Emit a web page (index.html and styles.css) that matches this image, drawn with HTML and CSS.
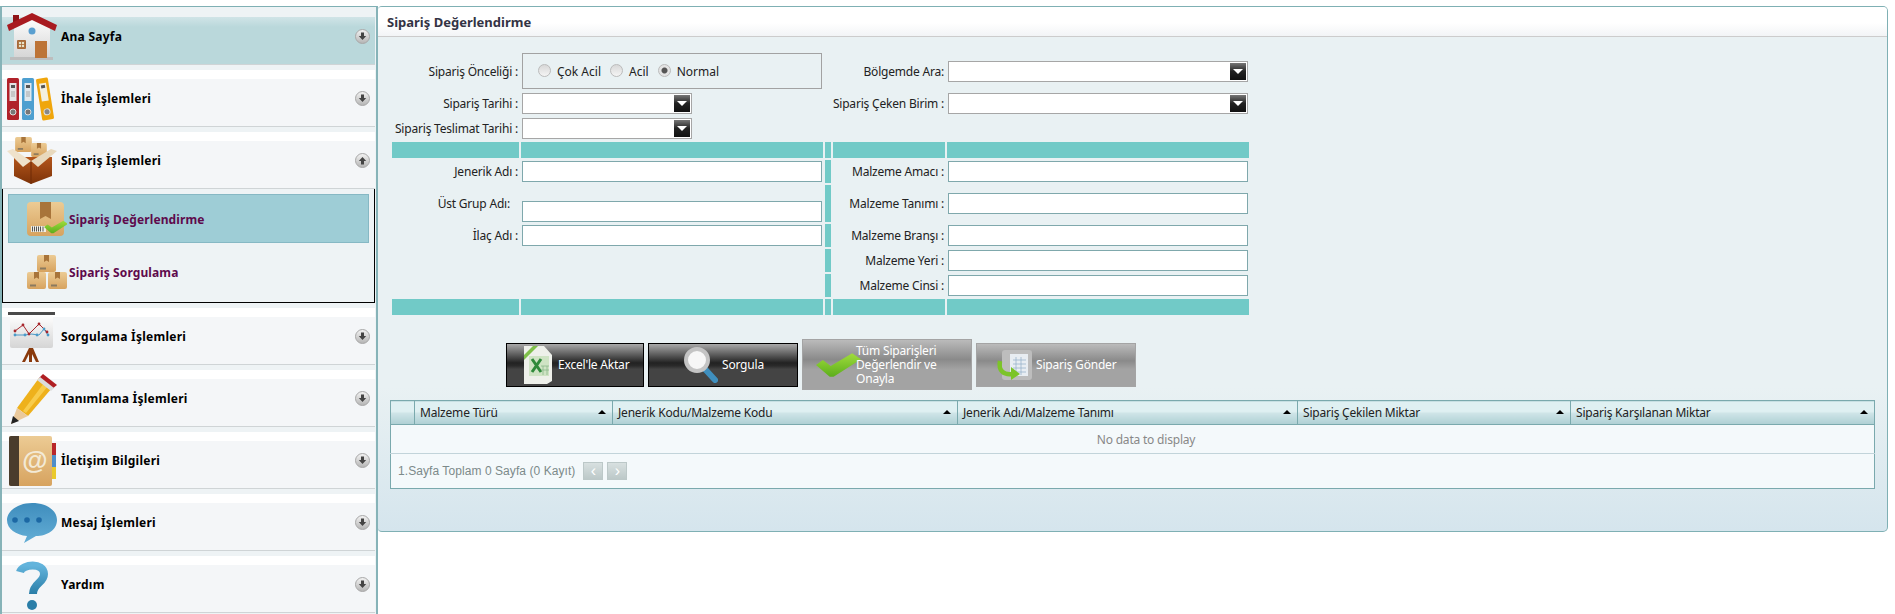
FILE: index.html
```html
<!DOCTYPE html>
<html lang="tr">
<head>
  <meta charset="UTF-8" />
  <title>Sipariş Değerlendirme</title>
  <link rel="stylesheet" href="styles.css">
</head>
<body>
  <svg class="defs" width="0" height="0">
    <defs>
      <linearGradient id="disc" x1="0" y1="0" x2="0" y2="1"><stop offset="0" stop-color="#f4f4f4"/><stop offset="1" stop-color="#b4b4b4"/></linearGradient>
      <linearGradient id="kraft" x1="0" y1="0" x2="0" y2="1"><stop offset="0" stop-color="#eccb94"/><stop offset="1" stop-color="#d7a35f"/></linearGradient>
      <linearGradient id="brown" x1="0" y1="0" x2="0" y2="1"><stop offset="0" stop-color="#b4561c"/><stop offset="1" stop-color="#7c3208"/></linearGradient>
      <linearGradient id="wall" x1="0" y1="0" x2="0" y2="1"><stop offset="0" stop-color="#ffffff"/><stop offset="1" stop-color="#d5d5d5"/></linearGradient>
      <linearGradient id="bluebub" x1="0" y1="0" x2="0" y2="1"><stop offset="0" stop-color="#3f8dbd"/><stop offset="1" stop-color="#63aed6"/></linearGradient>
      <linearGradient id="quest" x1="0" y1="0" x2="0" y2="1"><stop offset="0" stop-color="#63b4dc"/><stop offset="1" stop-color="#2a7ea8"/></linearGradient>
      <linearGradient id="checkg" x1="0" y1="0" x2="0" y2="1"><stop offset="0" stop-color="#a0dc3c"/><stop offset="1" stop-color="#5cae1c"/></linearGradient>
      <symbol id="arrow-down" viewBox="0 0 15 15">
        <circle cx="7.5" cy="7.5" r="7" fill="url(#disc)" stroke="#a8a8a8"/>
        <path d="M6 3.5h3v3.5h2.2L7.5 11 3.8 7H6z" fill="#444"/>
      </symbol>
      <symbol id="arrow-up" viewBox="0 0 15 15">
        <circle cx="7.5" cy="7.5" r="7" fill="url(#disc)" stroke="#a8a8a8"/>
        <path d="M6 11.5h3V8h2.2L7.5 4 3.8 8H6z" fill="#444"/>
      </symbol>
      <symbol id="pkg" viewBox="0 0 19 17">
        <rect x="0" y="0" width="19" height="17" rx="2" fill="url(#kraft)"/>
        <path d="M7 0h5v7l-2.5-1.5L7 7z" fill="#a8743a"/>
        <rect x="3" y="12.500" width="6" height="2" fill="#8a7a60"/>
      </symbol>
      <symbol id="check" viewBox="0 0 46 24">
        <path d="M0 12l7-5 8 6L37 0l9 6-28 18h-4z" fill="url(#checkg)"/>
      </symbol>
    </defs>
  </svg>

  <div class="page">
    <aside class="sidebar">
      <div class="menu-group">
        <div class="menu-head active">
          <svg class="menu-icon" viewBox="0 0 50 48">
            <rect x="6" y="2" width="6" height="9" fill="#8f1418"/>
            <path d="M7 14L25 3l18 11v31H7z" fill="url(#wall)"/>
            <rect x="3" y="44" width="43" height="3" fill="#bdbdbd"/>
            <path d="M0 12L25 0l25 12-2 6L25 7 2 18z" fill="#a81a20"/>
            <circle cx="25" cy="18" r="3.500" fill="#5a9fd0"/>
            <rect x="28" y="28" width="12" height="17" fill="#bd7336"/>
            <rect x="10" y="27" width="9" height="9" rx="1" fill="#a86a38"/>
            <path d="M11.500 28.500h6v6h-6zM14.500 28.500v6M11.500 31.500h6" fill="#e8e4c8" stroke="#a86a38" stroke-width=".8"/>
          </svg>
          <span class="menu-title">Ana Sayfa</span>
          <svg class="menu-arrow"><use href="#arrow-down"/></svg>
        </div>
      </div>

      <div class="menu-group">
        <div class="menu-head">
          <svg class="menu-icon" viewBox="0 0 50 44">
            <rect x="0" y="1" width="12" height="42" rx="1.500" fill="#b0222a"/>
            <rect x="15" y="1" width="12" height="42" rx="1.500" fill="#4d9fd0"/>
            <g transform="rotate(-9 38 22)">
              <rect x="32" y="1" width="12" height="42" rx="1.500" fill="#f0a60c"/>
              <rect x="34.500" y="6" width="7" height="18" fill="#f3efdf"/>
              <rect x="36" y="8" width="4" height="3" fill="#555"/>
              <circle cx="38" cy="35" r="3" fill="#888" stroke="#ddd"/>
            </g>
            <rect x="2.500" y="6" width="7" height="18" fill="#e4e4e4"/>
            <rect x="4" y="8" width="4" height="3" fill="#555"/>
            <rect x="17.500" y="6" width="7" height="18" fill="#dfe7ec"/>
            <rect x="19" y="8" width="4" height="3" fill="#555"/>
            <path d="M4 15h4M4 17h4M4 19h4M19 15h4M19 17h4M19 19h4" stroke="#999" stroke-width=".8"/>
            <circle cx="6" cy="35" r="3" fill="#777" stroke="#ddd"/>
            <circle cx="21" cy="35" r="3" fill="#777" stroke="#ddd"/>
          </svg>
          <span class="menu-title">İhale İşlemleri</span>
          <svg class="menu-arrow"><use href="#arrow-down"/></svg>
        </div>
      </div>

      <div class="menu-group">
        <div class="menu-head">
          <svg class="menu-icon" viewBox="0 0 50 48">
            <use href="#pkg" x="8" y="0" width="17" height="15"/>
            <use href="#pkg" x="24" y="6" width="16" height="14"/>
            <path d="M7 20h38v19L24 47 7 39z" fill="url(#brown)"/>
            <path d="M24 24v23" stroke="#6e2b06"/>
            <path d="M0 14l6 -2 18 12-8 6z" fill="#efe2cb"/>
            <path d="M50 14l-6 -2-20 12 7 6z" fill="#e8d9bd"/>
          </svg>
          <span class="menu-title">Sipariş İşlemleri</span>
          <svg class="menu-arrow"><use href="#arrow-up"/></svg>
        </div>
        <div class="submenu">
          <div class="sub-item selected">
            <svg class="sub-icon" viewBox="0 0 40 36">
              <rect x="0" y="1" width="37" height="34" rx="4" fill="url(#kraft)"/>
              <path d="M13 1h11v17l-5.500-3-5.500 3z" fill="#a8743a"/>
              <rect x="4" y="25" width="15" height="6" fill="#f2efe4"/>
              <path d="M5.500 25.500v5M7.500 25.500v5M9.500 25.500v5M11.500 25.500v5M13.500 25.500v5M16 25.500v5" stroke="#555"/>
              <use href="#check" x="17" y="17" width="24" height="18"/>
            </svg>
            <span class="sub-title">Sipariş Değerlendirme</span>
          </div>
          <div class="sub-item">
            <svg class="sub-icon" viewBox="0 0 40 34">
              <use href="#pkg" x="10" y="0" width="19" height="17"/>
              <use href="#pkg" x="0" y="17" width="19" height="17"/>
              <use href="#pkg" x="21" y="17" width="19" height="17"/>
            </svg>
            <span class="sub-title">Sipariş Sorgulama</span>
          </div>
        </div>
      </div>

      <div class="menu-group">
        <div class="menu-head">
          <svg class="menu-icon" viewBox="0 0 50 50">
            <rect x="1" y="0" width="47" height="3" fill="#4a4a4a"/>
            <rect x="3" y="3" width="43" height="33" rx="2" fill="url(#wall)"/>
            <path d="M22 36h4l6 14h-3l-4-8v8h-3v-8l-4 8h-3z" fill="#8a3a0c"/>
            <path d="M8 19l8-6 6 9 10-10 8 8" fill="none" stroke="#a8262c" stroke-width="1"/>
            <path d="M8 23h10l6-1 8 1 5-6 4 6" fill="none" stroke="#4b9ac8" stroke-width="1"/>
            <g fill="#a8262c"><circle cx="8" cy="19" r="1.400"/><circle cx="16" cy="13" r="1.400"/><circle cx="22" cy="22" r="1.400"/><circle cx="32" cy="12" r="1.400"/><circle cx="40" cy="20" r="1.400"/></g>
            <g fill="#4b9ac8"><circle cx="8" cy="23" r="1.400"/><circle cx="18" cy="23" r="1.400"/><circle cx="30" cy="23" r="1.400"/><circle cx="37" cy="17" r="1.400"/><circle cx="41" cy="23" r="1.400"/></g>
          </svg>
          <span class="menu-title">Sorgulama İşlemleri</span>
          <svg class="menu-arrow"><use href="#arrow-down"/></svg>
        </div>
      </div>

      <div class="menu-group">
        <div class="menu-head">
          <svg class="menu-icon" viewBox="0 0 50 50">
            <path d="M10 34L32 4l13 10-24 28z" fill="#eeb11c"/>
            <path d="M16 37L37 9l4 3-22 27z" fill="#f8cc4c"/>
            <path d="M32 4l4-4 14 11-5 4z" fill="#b01e22"/>
            <path d="M30 6l3-3 14 11-3 3z" fill="#dcdcdc"/>
            <path d="M10 34l11 8L4 50z" fill="#eac99c"/>
            <path d="M6 42l6 5-8 3z" fill="#222"/>
          </svg>
          <span class="menu-title">Tanımlama İşlemleri</span>
          <svg class="menu-arrow"><use href="#arrow-down"/></svg>
        </div>
      </div>

      <div class="menu-group">
        <div class="menu-head">
          <svg class="menu-icon" viewBox="0 0 50 50">
            <rect x="44" y="7" width="5" height="12" fill="#b8262a"/>
            <rect x="44" y="19" width="5" height="12" fill="#4f8ec8"/>
            <rect x="44" y="31" width="5" height="12" fill="#eac92c"/>
            <rect x="2" y="0" width="43" height="50" rx="2" fill="url(#kraft)"/>
            <path d="M4 0h8v50H4a2 2 0 0 1-2-2V2a2 2 0 0 1 2-2z" fill="#4a3c2c"/>
            <text x="28" y="33" class="at-sign">@</text>
          </svg>
          <span class="menu-title">İletişim Bilgileri</span>
          <svg class="menu-arrow"><use href="#arrow-down"/></svg>
        </div>
      </div>

      <div class="menu-group">
        <div class="menu-head">
          <svg class="menu-icon" viewBox="0 0 50 40">
            <path d="M25 0c14 0 25 7 25 17S40 33 29 33L17 40l3-7C9 32 0 26 0 17S11 0 25 0z" fill="url(#bluebub)"/>
            <circle cx="8" cy="17" r="2.800" fill="#1c68a4"/>
            <circle cx="20" cy="17" r="2.800" fill="#1c68a4"/>
            <circle cx="32" cy="17" r="2.800" fill="#1c68a4"/>
          </svg>
          <span class="menu-title">Mesaj İşlemleri</span>
          <svg class="menu-arrow"><use href="#arrow-down"/></svg>
        </div>
      </div>

      <div class="menu-group">
        <div class="menu-head">
          <svg class="menu-icon" viewBox="0 0 50 50">
            <path d="M13 12C15 4 37 2 37 14c0 9-11 9-11 20" fill="none" stroke="url(#quest)" stroke-width="8"/>
            <circle cx="25" cy="45" r="5" fill="#2a7ea8"/>
          </svg>
          <span class="menu-title">Yardım</span>
          <svg class="menu-arrow"><use href="#arrow-down"/></svg>
        </div>
      </div>
    </aside>

    <main class="panel">
      <div class="panel-head">Sipariş Değerlendirme</div>
      <div class="panel-body">

        <div class="filter-grid">
          <label class="lbl row-a">Sipariş Önceliği :</label>
          <div class="priority">
            <label class="radio"><input type="radio" name="oncelik"> Çok Acil</label>
            <label class="radio"><input type="radio" name="oncelik"> Acil</label>
            <label class="radio"><input type="radio" name="oncelik" checked> Normal</label>
          </div>
          <i></i>
          <label class="lbl">Bölgemde Ara:</label>
          <div class="select wide"><b></b></div>

          <label class="lbl top">Sipariş Tarihi :</label>
          <div class="select narrow top"><b></b></div>
          <i></i>
          <label class="lbl top">Sipariş Çeken Birim :</label>
          <div class="select wide top"><b></b></div>

          <label class="lbl top">Sipariş Teslimat Tarihi :</label>
          <div class="select narrow top"><b></b></div>
          <i></i><i></i><i></i>

          <div class="bar"></div><div class="bar"></div><div class="bar"></div><div class="bar"></div><div class="bar"></div>

          <label class="lbl">Jenerik Adı :</label>
          <input class="field" type="text">
          <div class="bar"></div>
          <label class="lbl">Malzeme Amacı :</label>
          <input class="field" type="text">

          <label class="lbl inset">Üst Grup Adı:</label>
          <input class="field low" type="text">
          <div class="bar"></div>
          <label class="lbl">Malzeme Tanımı :</label>
          <input class="field" type="text">

          <label class="lbl">İlaç Adı :</label>
          <input class="field" type="text">
          <div class="bar"></div>
          <label class="lbl">Malzeme Branşı :</label>
          <input class="field" type="text">

          <i></i><i></i>
          <div class="bar"></div>
          <label class="lbl">Malzeme Yeri :</label>
          <input class="field" type="text">

          <i></i><i></i>
          <div class="bar"></div>
          <label class="lbl">Malzeme Cinsi :</label>
          <input class="field" type="text">

          <div class="bar"></div><div class="bar"></div><div class="bar"></div><div class="bar"></div><div class="bar"></div>
        </div>

        <div class="actions">
          <button class="btn dark btn-excel">
            <svg width="30" height="38" viewBox="0 0 30 38">
              <path d="M2 0h20l8 9v26l-5 3H2z" fill="#eef0ea"/>
              <path d="M2 9l9-9h5L2 14z" fill="#7fc04a"/>
              <rect x="7" y="10" width="20" height="20" fill="#cfe3c4"/>
              <path d="M10 13l9 13M19 13l-9 13" stroke="#2f8a3a" stroke-width="3"/>
              <path d="M19 20h8M19 24h8M21 20v9M25 20v9" stroke="#8ab88a" stroke-width=".8"/>
            </svg>
            <span>Excel'le Aktar</span>
          </button>
          <button class="btn dark btn-query">
            <svg width="34" height="36" viewBox="0 0 34 36">
              <path d="M20 21l11 12" stroke="#3f8fbe" stroke-width="6" stroke-linecap="round"/>
              <circle cx="13" cy="13" r="11" fill="#f7f7f7" stroke="#c4c4c4" stroke-width="4"/>
            </svg>
            <span>Sorgula</span>
          </button>
          <button class="btn gray btn-approve">
            <svg width="45" height="24"><use href="#check"/></svg>
            <span>Tüm Siparişleri Değerlendir ve Onayla</span>
          </button>
          <button class="btn gray btn-send">
            <svg class="send-icon" width="30" height="30" viewBox="0 0 30 30">
              <rect x="0" y="0" width="30" height="30" rx="3" fill="#bdbdbd"/>
              <rect x="8" y="4" width="18" height="22" fill="#e8edf2"/>
              <path d="M11 10h13M11 14h13M11 18h13M11 22h13M14 7v18M19 7v18" stroke="#9ab4cc" stroke-width=".8"/>
              <path d="M-2 11C-4 21 2 25 10 24" fill="none" stroke="#7cc428" stroke-width="4.500"/>
              <path d="M9 17l9 7-9 6z" fill="#7cc428"/>
            </svg>
            <span>Sipariş Gönder</span>
          </button>
        </div>

        <table class="grid">
          <thead>
            <tr>
              <th class="col-sel"></th>
              <th class="col-a"><span class="sort">Malzeme Türü</span></th>
              <th class="col-b"><span class="sort">Jenerik Kodu/Malzeme Kodu</span></th>
              <th class="col-c"><span class="sort">Jenerik Adı/Malzeme Tanımı</span></th>
              <th class="col-d"><span class="sort">Sipariş Çekilen Miktar</span></th>
              <th><span class="sort">Sipariş Karşılanan Miktar</span></th>
            </tr>
          </thead>
          <tbody>
            <tr><td colspan="6" class="empty">No data to display</td></tr>
          </tbody>
          <tfoot>
            <tr>
              <td colspan="6" class="pager">
                <div class="pager-row">
                  <span class="pager-text">1.Sayfa Toplam 0 Sayfa (0 Kayıt)</span>
                  <span class="page-btn">&lsaquo;</span>
                  <span class="page-btn">&rsaquo;</span>
                </div>
              </td>
            </tr>
          </tfoot>
        </table>
      </div>
    </main>
  </div>
</body>
</html>
```
FILE: styles.css
```css
* {
  box-sizing: border-box;
}

html, body {
  margin: 0;
  height: 100%;
  background: white;
  font-family: "Noto Sans", sans-serif;
  font-size: 12px;
  color: #222;
  overflow: hidden;
}

.defs {
  display: block;
  height: 0;
}

.page {
  display: flex;
  align-items: flex-start;
  padding-top: 6px;
  height: 614px;
}

/* left menu */
.sidebar {
  width: 378px;
  height: 608px;
  flex-shrink: 0;
  background: #eef3f5;
  border-top: 1px solid #7fb0b4;
  border-left: 2px solid #86b3b8;
  border-right: 2px solid #86b3b8;
  padding: 10px 1px 0 0;
}

.menu-group + .menu-group {
  margin-top: 5px;
  border-top: 9px solid white;
}

.menu-head {
  display: flex;
  align-items: center;
  height: 48px;
  padding: 0 5px 8px 5px;
  background: #f4f6f8;
  border-bottom: 1px solid #cfd4d6;
}

.menu-head.active {
  background: linear-gradient(#d0e4e7, #bad8db 10px);
}

.menu-icon {
  width: 50px;
  height: 50px;
  flex-shrink: 0;
}

.menu-title {
  margin-left: 4px;
  font-weight: bold;
  font-size: 12px;
  letter-spacing: 0.25px;
  color: #000;
}

.menu-arrow {
  width: 15px;
  height: 15px;
  margin-left: auto;
}

.at-sign {
  font-family: "Liberation Sans", sans-serif;
  font-size: 26px;
  font-weight: bold;
  fill: #f3ead6;
  text-anchor: middle;
}

.submenu {
  height: 114px;
  padding: 5px 5px 0 5px;
  margin: 0;
  border: 1px solid black;
  border-top: 0;
}

.sub-item {
  display: flex;
  align-items: center;
  height: 49px;
  padding-left: 18px;
  margin-bottom: 4px;
  border: 1px solid transparent;
}

.sub-item.selected {
  background: #9ecdd6;
  border-color: #86b8c4;
}

.sub-icon {
  width: 40px;
  height: 36px;
  flex-shrink: 0;
}

.sub-title {
  margin: 2px 0 0 2px;
  font-weight: bold;
  letter-spacing: 0.12px;
  color: #5e0a4c;
}

/* main panel */
.panel {
  width: 1510px;
  height: 526px;
  border-top: 1px solid #7fb0b4;
  border-right: 1px solid #7fb0b4;
  border-bottom: 1px solid #7fb0b4;
  border-radius: 4px 5px 5px 4px;
  background: linear-gradient(#e9f1f3 380px, #d5e5ed);
  overflow: hidden;
}

.panel-head {
  height: 30px;
  padding: 6px 0 0 9px;
  font-size: 13px;
  font-weight: bold;
  color: #333344;
  background: linear-gradient(white 16px, #f2f4f6);
  border-bottom: 1px solid #cccccc;
}

.panel-body {
  padding: 14px 12px 0 12px;
}

.filter-grid {
  display: grid;
  grid-template-columns: 127px 302px 6px 112px 302px;
  grid-template-rows: 40px 23px 22px 16px 23px 37px 23px 23px 23px 16px;
  gap: 2px;
  margin-left: 2px;
}

.lbl {
  align-self: center;
  text-align: right;
  white-space: nowrap;
  letter-spacing: -0.2px;
  padding-right: 1px;
  justify-self: end;
}

.lbl.top {
  align-self: start;
  padding-top: 2px;
}

.lbl.inset {
  padding-right: 9px;
}

.bar {
  background: #71cac7;
}

.priority {
  display: flex;
  align-items: center;
  height: 36px;
  width: 300px;
  margin: 2px 0 0 1px;
  padding-left: 15px;
  gap: 9px;
  border: 1px solid #a2a2a2;
}

.radio {
  display: flex;
  align-items: center;
  gap: 6px;
}

.radio input {
  appearance: none;
  width: 13px;
  height: 13px;
  margin: -2px 0 0 0;
  border: 1px solid #bbb;
  border-radius: 50%;
  background: linear-gradient(#d8d8d8, #f4f4f4);
}

.radio input:checked {
  background: radial-gradient(circle, #555 2.5px, #e4e4e4 3.5px);
}

.field {
  width: 300px;
  height: 21px;
  margin: 0 0 0 1px;
  padding: 0;
  align-self: center;
  justify-self: start;
  border: 1px solid #7fa8ac;
  background: white;
}

.field.low {
  align-self: end;
}

.select {
  position: relative;
  height: 21px;
  margin-left: 1px;
  align-self: center;
  border: 1px solid #a6a6a6;
  background: white;
}

.select.top {
  align-self: start;
}

.select.wide {
  width: 300px;
}

.select.narrow {
  width: 170px;
}

.select b {
  position: absolute;
  right: 1px;
  top: 1px;
  width: 16px;
  height: 17px;
  background: linear-gradient(#777, #222 50%, #111);
}

.select b::after {
  content: "";
  position: absolute;
  left: 3px;
  top: 6px;
  border: 5px solid transparent;
  border-top: 5px solid white;
  border-bottom: 0;
}

.actions {
  display: flex;
  align-items: center;
  gap: 4px;
  margin: 24px 0 10px 116px;
}

.btn {
  display: flex;
  align-items: center;
  height: 44px;
  padding: 0;
  font: inherit;
  letter-spacing: -0.2px;
  color: white;
  text-align: left;
}

.btn.dark {
  border: 1px solid black;
  background: linear-gradient(#a9a9a9, #222 45%, #2a2a2a 52%, #444 60%);
}

.btn.gray {
  border: 1px solid #a4a4a4;
  background: linear-gradient(#bbb, #8a8a8a 40%, #a3a3a3 60%);
}

.btn-excel {
  width: 138px;
  padding-left: 15px;
  gap: 6px;
}

.btn-query {
  width: 150px;
  padding-left: 35px;
  gap: 4px;
}

.btn-approve {
  width: 170px;
  height: 51px;
  padding-left: 13px;
  line-height: 14px;
}

.btn-approve span {
  width: 100px;
  margin-left: -5px;
}

.btn-send {
  width: 160px;
  padding-left: 25px;
  gap: 4px;
}

.send-icon {
  overflow: visible;
}

.grid {
  width: 1485px;
  table-layout: fixed;
  border-collapse: collapse;
  border: 1px solid #7aa9ad;
  background: #f4f9fb;
}

.grid th {
  height: 24px;
  padding: 0 5px;
  font-weight: normal;
  letter-spacing: -0.2px;
  text-align: left;
  border-left: 1px solid #7aa9ad;
  border-bottom: 1px solid #7aa9ad;
  background: linear-gradient(#dff0f2 45%, #cfe5e8 50%, #aecfd3);
}

.col-sel { width: 24px; }
.col-a { width: 198px; }
.col-b { width: 345px; }
.col-c { width: 340px; }
.col-d { width: 273px; }

.sort {
  display: block;
  position: relative;
}

.sort::after {
  content: "";
  position: absolute;
  right: 1px;
  top: 6px;
  border: 4px solid transparent;
  border-bottom: 4px solid black;
  border-top: 0;
}

.empty {
  height: 29px;
  padding-left: 28px;
  text-align: center;
  letter-spacing: -0.2px;
  color: #888;
  border-bottom: 1px solid #c2d4da;
}

.pager {
  height: 35px;
  padding: 0 0 0 7px;
  font-family: "Liberation Sans", sans-serif;
  color: #7c8a8a;
}

.pager-row {
  display: flex;
  align-items: center;
  gap: 4px;
}

.pager-text {
  margin-right: 4px;
  letter-spacing: 0.07px;
}

.page-btn {
  width: 20px;
  height: 18px;
  text-align: center;
  line-height: 15px;
  font-size: 16px;
  color: white;
  border: 1px solid #bcc8c8;
  background: linear-gradient(#d8e0e0, #bcc8c8);
}
```
